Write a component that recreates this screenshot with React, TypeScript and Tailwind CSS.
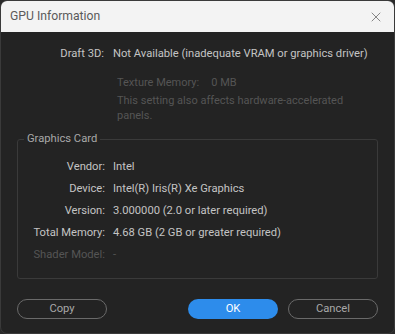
import { X } from "lucide-react";

const font = { fontFamily: 'Roboto, "Noto Sans", sans-serif' };

function Row({ label, value, dim }: { label: string; value: string; dim?: boolean }) {
  return (
    <div className={`flex h-[22px] items-center whitespace-nowrap ${dim ? "text-[#555555]" : "text-[#c4c4c4]"}`}>
      <span className="w-[87px] shrink-0 text-right">{label}</span>
      <span className="pl-[8px]">{value}</span>
    </div>
  );
}

export default function App() {
  return (
    <div className="h-[334px] w-[395px] bg-[#2a2a2a] text-[11.2px]" style={font}>
      <div className="flex h-full flex-col overflow-hidden rounded-[7px] border border-[#3a3a3a] bg-[#232323]">
        <div className="flex h-[31px] shrink-0 items-center justify-between bg-[#f3f3f3] pl-[9px] pr-[10px]">
          <span className="text-[12.2px] text-[#5a5a5a]">GPU Information</span>
          <X size={16} strokeWidth={1.2} className="text-[#6a6a6a]" />
        </div>

        <div className="flex flex-1 flex-col px-[16px]">
          <div className="mt-[11px] flex h-[22px] items-center whitespace-nowrap text-[#c4c4c4]">
            <span className="w-[87px] shrink-0 text-right">Draft 3D:</span>
            <span className="pl-[9px]">Not Available (inadequate VRAM or graphics driver)</span>
          </div>
          <div className="ml-[100px] mt-[9px] flex flex-col text-[11px] text-[#555555]">
            <div className="flex h-[18px] items-center gap-[12px]">
              <span>Texture Memory:</span>
              <span>0 MB</span>
            </div>
            <div className="mt-[1px] w-[240px] leading-[15px]">
              This setting also affects hardware-accelerated panels.
            </div>
          </div>

          <fieldset className="mt-[8px] rounded-[3px] border border-[#3a3a3a] pb-[11px]">
            <legend className="ml-[6px] px-[3px] text-[#a8a8a8]">Graphics Card</legend>
            <div className="mt-[9px] flex flex-col">
              <Row label="Vendor:" value="Intel" />
              <Row label="Device:" value="Intel(R) Iris(R) Xe Graphics" />
              <Row label="Version:" value="3.000000 (2.0 or later required)" />
              <Row label="Total Memory:" value="4.68 GB (2 GB or greater required)" />
              <Row label="Shader Model:" value="-" dim />
            </div>
          </fieldset>

          <div className="mt-auto mb-[14px] flex items-center">
            <button className="h-[20px] w-[90px] rounded-full border border-[#6a6a6a] text-[#a8a8a8]">Copy</button>
            <div className="flex-1" />
            <button className="h-[20px] w-[90px] rounded-full bg-[#2d8ceb] text-white">OK</button>
            <button className="ml-[10px] h-[20px] w-[90px] rounded-full border border-[#6a6a6a] text-[#a8a8a8]">Cancel</button>
          </div>
        </div>
      </div>
    </div>
  );
}
